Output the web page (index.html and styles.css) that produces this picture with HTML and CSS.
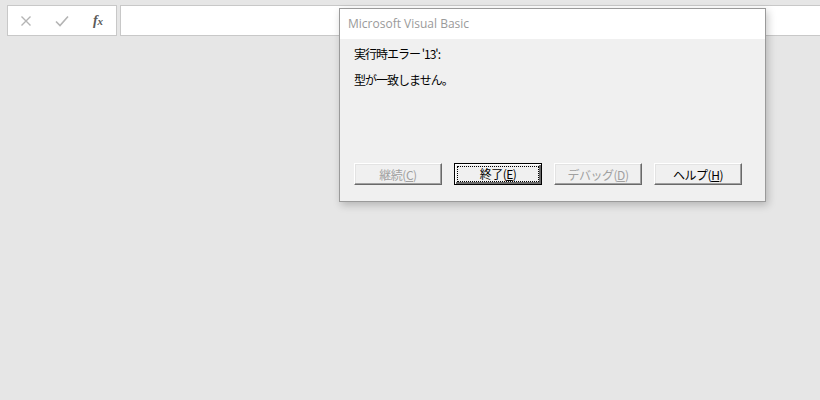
FILE: index.html
```html
<!DOCTYPE html>
<html lang="ja">
<head>
    <meta charset="UTF-8">
    <title>Microsoft Visual Basic</title>
    <link rel="stylesheet" href="styles.css">
</head>
<body>
    <div class="formula-bar">
        <div class="fx-buttons">
            <span class="fx-btn">
                <svg width="12" height="12" viewBox="0 0 12 12"><path d="M1.5 1.5 L10.5 10.5 M10.5 1.5 L1.5 10.5" stroke="#b4b4b4" stroke-width="1.4" fill="none"/></svg>
            </span>
            <span class="fx-btn">
                <svg width="14" height="12" viewBox="0 0 14 12"><path d="M1 6.5 L5 10.5 L13 1.5" stroke="#b4b4b4" stroke-width="1.6" fill="none"/></svg>
            </span>
            <span class="fx-btn fx">f<small>x</small></span>
        </div>
        <div class="formula-input"></div>
    </div>

    <div class="dialog">
        <div class="dialog-title">Microsoft Visual Basic</div>
        <div class="dialog-body">
            <p class="msg">実行時エラー '13':</p>
            <p class="msg">型が一致しません。</p>
            <div class="buttons">
                <button class="btn" disabled>継続(<u>C</u>)</button>
                <button class="btn default"><span class="focus">終了(<u>E</u>)</span></button>
                <button class="btn" disabled>デバッグ(<u>D</u>)</button>
                <button class="btn">ヘルプ(<u>H</u>)</button>
            </div>
        </div>
    </div>
</body>
</html>
```

FILE: styles.css
```css
body {
    margin: 0;
    background-color: #e6e6e6;
    font-family: "Noto Sans CJK JP", sans-serif;
    width: 820px;
    height: 400px;
    overflow: hidden;
    position: relative;
}

.formula-bar {
    display: flex;
    gap: 3px;
    padding: 5px 0 0 7px;
}

.fx-buttons {
    display: flex;
    align-items: center;
    width: 108px;
    height: 29px;
    background-color: #fff;
    border: 1px solid #c8c8c8;
}

.fx-btn {
    width: 36px;
    display: flex;
    justify-content: center;
    align-items: center;
}

.fx-btn.fx {
    font-family: "Liberation Serif", serif;
    font-style: italic;
    font-weight: bold;
    font-size: 14px;
    color: #5a5a5a;
    align-items: baseline;
}

.fx-btn.fx small {
    font-size: 11px;
}

.formula-input {
    flex: 1;
    height: 29px;
    background-color: #fff;
    border: 1px solid #c8c8c8;
    border-right: none;
}

.dialog {
    position: absolute;
    left: 339px;
    top: 8px;
    width: 425px;
    height: 192px;
    border: 1px solid #9a9a9a;
    background-color: #f0f0f0;
    box-shadow: 2px 3px 8px rgba(0, 0, 0, 0.22);
}

.dialog-title {
    height: 30px;
    line-height: 29px;
    background-color: #fff;
    padding-left: 8px;
    font-family: "Open Sans", "Noto Sans", sans-serif;
    font-size: 12px;
    color: #9a9a9a;
}

.dialog-body {
    padding: 6px 0 0 14px;
}

.msg {
    margin: 0 0 8px 0;
    font-size: 12px;
    line-height: 18px;
    letter-spacing: -1px;
    color: #000;
}

.buttons {
    display: flex;
    gap: 12px;
    margin-top: 74px;
}

.btn {
    width: 88px;
    height: 22px;
    padding: 0;
    font-family: "Noto Sans CJK JP", sans-serif;
    font-size: 12px;
    letter-spacing: -0.5px;
    color: #000;
    background-color: #f0f0f0;
    border: 1px solid;
    border-color: #fff #696969 #696969 #fff;
    box-shadow: inset -1px -1px 0 #a0a0a0, inset 1px 1px 0 #e3e3e3;
    display: flex;
    justify-content: center;
    align-items: center;
}

.btn:disabled {
    color: #a0a0a0;
}

.btn.default {
    border: 1px solid #000;
    box-shadow: inset 1px 1px 0 #fff, inset -2px -2px 0 #696969;
}

.focus {
    display: block;
    width: 80px;
    height: 14px;
    line-height: 14px;
    border: 1px dotted #000;
    text-align: center;
}

u {
    text-underline-offset: 1px;
}
```
